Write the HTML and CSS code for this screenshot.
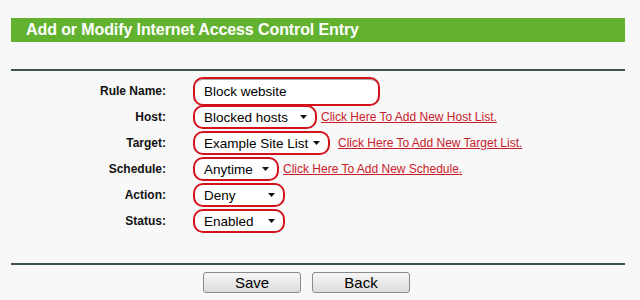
FILE: index.html
```html
<!DOCTYPE html>
<html>
<head>
<meta charset="utf-8">
<link rel="stylesheet" href="styles.css">
</head>
<body>
<div class="page">
  <div class="title">Add or Modify Internet Access Control Entry</div>
  <div class="rule"></div>
  <div class="form">
    <div class="label">Rule Name:</div>
    <div class="cell"><span class="box text-box">Block website</span></div>

    <div class="label">Host:</div>
    <div class="cell"><span class="box sel w-host">Blocked hosts<svg class="caret" viewBox="0 0 7 4"><path d="M0 0H7L3.5 4Z"/></svg></span><a class="link" href="#">Click Here To Add New Host List.</a></div>

    <div class="label">Target:</div>
    <div class="cell"><span class="box sel w-target">Example Site List<svg class="caret" viewBox="0 0 7 4"><path d="M0 0H7L3.5 4Z"/></svg></span><a class="link l-target" href="#">Click Here To Add New Target List.</a></div>

    <div class="label">Schedule:</div>
    <div class="cell"><span class="box sel w-sched">Anytime<svg class="caret" viewBox="0 0 7 4"><path d="M0 0H7L3.5 4Z"/></svg></span><a class="link" href="#">Click Here To Add New Schedule.</a></div>

    <div class="label">Action:</div>
    <div class="cell"><span class="box sel w-small">Deny<svg class="caret" viewBox="0 0 7 4"><path d="M0 0H7L3.5 4Z"/></svg></span></div>

    <div class="label">Status:</div>
    <div class="cell"><span class="box sel w-small">Enabled<svg class="caret" viewBox="0 0 7 4"><path d="M0 0H7L3.5 4Z"/></svg></span></div>
  </div>
  <div class="rule rule-bottom"></div>
  <div class="buttons">
    <button class="btn">Save</button>
    <button class="btn">Back</button>
  </div>
</div>
</body>
</html>
```
FILE: styles.css
```css
html, body {
  margin: 0;
  padding: 0;
  background: #f8f8f8;
  font-family: "Liberation Sans", Arial, sans-serif;
}
.page {
  width: 614px;
  padding: 18px 0 0 11px;
}
.title {
  height: 24px;
  background: #63b22f;
  color: #fff;
  font-weight: bold;
  font-size: 16px;
  line-height: 24px;
  padding-left: 15px;
  letter-spacing: -0.1px;
}
.rule {
  height: 2px;
  background: #3d5548;
  margin-top: 27px;
}
.form {
  display: grid;
  grid-template-columns: 155px 1fr;
  grid-auto-rows: 26px;
  column-gap: 27px;
  margin-top: 7px;
}
.label {
  text-align: right;
  font-weight: bold;
  font-size: 12px;
  color: #111;
  line-height: 26px;
}
.cell {
  display: flex;
  align-items: center;
  white-space: nowrap;
}
.box {
  box-sizing: border-box;
  height: 24px;
  border: 2.5px solid #d3121c;
  border-radius: 10px;
  font-size: 13.5px;
  color: #000;
  display: flex;
  align-items: center;
  padding-left: 9px;
  background: #fff;
  white-space: nowrap;
  flex: none;
}
.text-box {
  width: 187px;
  height: 29px;
  box-shadow: inset 0 2px 0 -1px #aaa;
}
.sel {
  padding-right: 8px;
}
.w-host { width: 124px; }
.w-target { width: 137px; }
.w-sched { width: 86px; }
.w-small { width: 92px; }
.caret {
  width: 7px;
  height: 4px;
  fill: #111;
  margin-left: auto;
  flex: none;
}
.link {
  color: #c8202a;
  font-size: 12px;
  margin-left: 4px;
  text-decoration: underline;
}
.l-target { margin-left: 8px; }
.rule-bottom {
  margin-top: 29px;
}
.buttons {
  display: flex;
  gap: 11px;
  padding-left: 192px;
  margin-top: 7px;
}
.btn {
  width: 98px;
  height: 21px;
  border: 1px solid #8a8a8a;
  border-radius: 3px;
  background: linear-gradient(#f6f6f6, #dcdcdc);
  font-family: "Liberation Sans", Arial, sans-serif;
  font-size: 15px;
  color: #000;
  padding: 0;
  line-height: 19px;
}
```
